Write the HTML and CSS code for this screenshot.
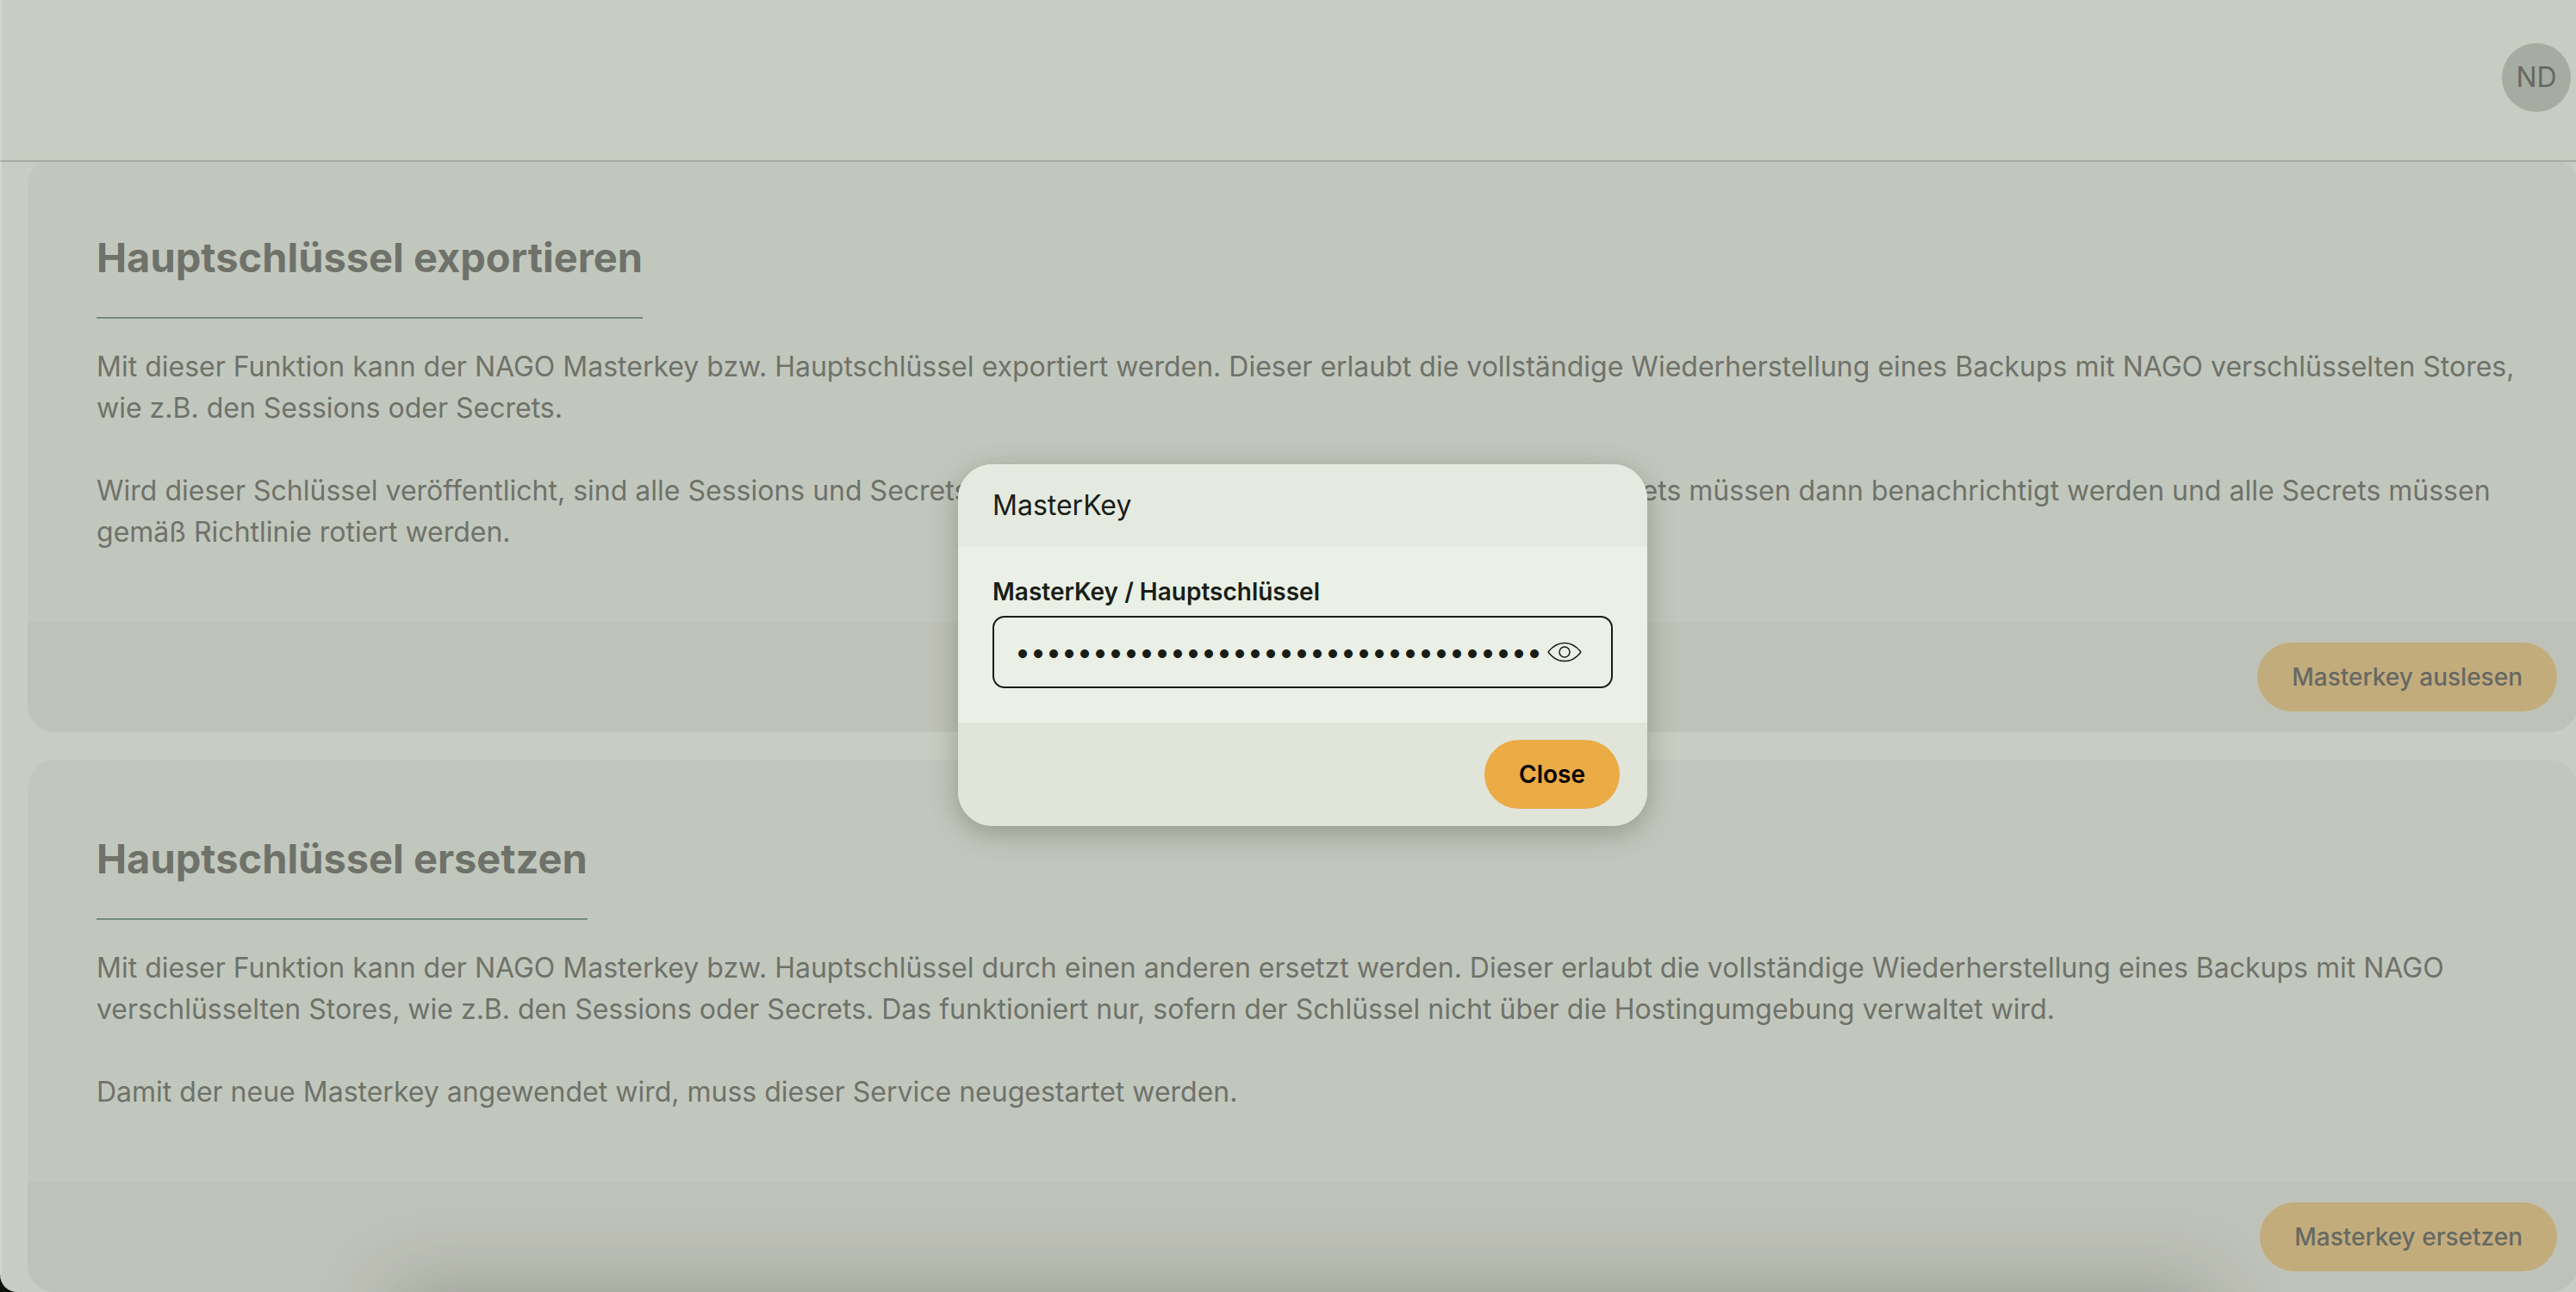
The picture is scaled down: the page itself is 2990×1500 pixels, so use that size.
FILE: index.html
```html
<!DOCTYPE html>
<html lang="de">
<head>
<meta charset="utf-8">
<title>Masterkey</title>
<link rel="stylesheet" href="styles.css">
</head>
<body>
<div class="app">
  <header class="topbar">
    <button class="avatar" type="button">ND</button>
  </header>
  <main class="cards">
    <section class="card">
      <div class="card-body">
        <h2 class="card-title">Hauptschlüssel exportieren</h2>
        <p class="card-text">Mit dieser Funktion kann der NAGO Masterkey bzw. Hauptschlüssel exportiert werden. Dieser erlaubt die vollständige Wiederherstellung eines Backups mit NAGO verschlüsselten Stores, wie z.B. den Sessions oder Secrets.</p>
        <p class="card-text">Wird dieser Schlüssel veröffentlicht, sind alle Sessions und Secrets kompromittiert. Alle Eigentümer der jeweiligen Secrets müssen dann benachrichtigt werden und alle Secrets müssen gemäß Richtlinie rotiert werden.</p>
      </div>
      <footer class="card-footer"><button class="button" type="button">Masterkey auslesen</button></footer>
    </section>
    <section class="card">
      <div class="card-body">
        <h2 class="card-title">Hauptschlüssel ersetzen</h2>
        <p class="card-text">Mit dieser Funktion kann der NAGO Masterkey bzw. Hauptschlüssel durch einen anderen ersetzt werden. Dieser erlaubt die vollständige Wiederherstellung eines Backups mit NAGO verschlüsselten Stores, wie z.B. den Sessions oder Secrets. Das funktioniert nur, sofern der Schlüssel nicht über die Hostingumgebung verwaltet wird.</p>
        <p class="card-text">Damit der neue Masterkey angewendet wird, muss dieser Service neugestartet werden.</p>
      </div>
      <footer class="card-footer"><button class="button" type="button">Masterkey ersetzen</button></footer>
    </section>
  </main>
  <div class="overlay">
    <div class="dialog" role="dialog" aria-modal="true" aria-labelledby="dialog-title">
      <header class="dialog-header" id="dialog-title">MasterKey</header>
      <div class="dialog-body">
        <label class="field-label" for="masterkey">MasterKey / Hauptschlüssel</label>
        <div class="field">
          <input class="field-input" id="masterkey" type="password" value="0123456789abcdef0123456789abcdef0123456789abcdef">
          <button class="field-toggle" type="button" aria-label="Anzeigen">
            <svg class="eye" viewBox="0 0 40 24" fill="none" stroke="currentColor" stroke-width="1.5" stroke-linejoin="round">
              <path d="M1.6 12.8Q1 12 1.6 11.2C6.500 5 13 1.400 20 1.400S33.500 5 38.400 11.200Q39 12 38.400 12.800C33.500 19 27 22.600 20 22.600S6.500 19 1.600 12.800Z"/>
              <circle cx="20" cy="12" r="6"/>
            </svg>
          </button>
        </div>
      </div>
      <footer class="dialog-footer"><button class="button button-primary" type="button">Close</button></footer>
    </div>
  </div>
</div>
<div class="window-edge"></div>
<div class="dock-shadow"></div>
</body>
</html>
```
FILE: styles.css
```css
* { box-sizing: border-box; }

html {
  overflow: hidden;
  background: #0b120b;
}

body {
  margin: 0;
  overflow: hidden;
  min-height: 100vh;
  font-family: Inter, "Liberation Sans", sans-serif;
  font-size: 32px;
  line-height: 48px;
  color: #6f726a;
  background: #c9ccc2;
  border-bottom-left-radius: 20px;
}

button, input { font: inherit; color: inherit; border: 0; padding: 0; margin: 0; background: none; }

/* The window's right edge lies beyond the visible area. */
.app { position: relative; width: calc(100% + 34px); }

.topbar {
  position: relative;
  z-index: 1;
  display: flex;
  justify-content: flex-end;
  height: 188px;
  padding: 50px 40px 0 0;
  border-bottom: 2px solid #a6aca1;
  background: #c9ccc2;
}

.avatar {
  width: 80px;
  height: 80px;
  border-radius: 50%;
  background: #a6aca1;
  color: #666963;
}

.cards {
  display: flex;
  flex-direction: column;
  gap: 32px;
  margin-top: -4px;
  padding: 0 32px;
}

.card { border-radius: 32px; background: #c2c7bd; overflow: hidden; }
.card-body { padding: 80px 64px 80px 80px; }

.card-title {
  width: fit-content;
  margin: 0 0 32px;
  padding-bottom: 34px;
  border-bottom: 2px solid #738c7d;
  font-size: 47px;
  line-height: 70px;
  font-weight: 700;
}

.card-text { margin: 0 0 48px; }
.card-text:last-child { margin-bottom: 0; }

.card-footer {
  display: flex;
  justify-content: flex-end;
  padding: 24px;
  background: #bfc2b8;
}

.button {
  height: 80px;
  padding: 0 40px;
  border-radius: 40px;
  background: #c3ac7c;
  color: #666963;
  font-size: 28px;
  font-weight: 500;
}

.overlay {
  position: absolute;
  z-index: 2;
  inset: 0;
  display: flex;
  align-items: center;
  justify-content: center;
  padding-bottom: 2px;
}

.dialog {
  width: 800px;
  border-radius: 40px;
  overflow: hidden;
  background: #eaf0e5;
  color: #191d17;
  box-shadow: 0 8px 32px rgba(60, 70, 55, 0.36);
}

.dialog-header { padding: 24px 40px; background: #e4eadf; }
.dialog-body { padding: 32px 40px 40px; }

.field-label {
  display: block;
  margin-bottom: 8px;
  font-size: 28px;
  line-height: 40px;
  font-weight: 600;
}

.field {
  display: flex;
  align-items: center;
  height: 84px;
  padding: 0 32px 0 24px;
  border: 2px solid #191d17;
  border-radius: 14px;
}

.field-input { flex: 1; min-width: 0; outline: none; }
.field-toggle { display: flex; margin: 0 2px 0 6px; }
.eye { width: 40px; height: 24px; }

.dialog-footer {
  display: flex;
  justify-content: flex-end;
  padding: 20px 32px;
  background: #e1e4d9;
}

.button-primary { background: #ebab45; color: #000; font-weight: 600; }

/* Light rim of the window on the left. */
.window-edge {
  position: fixed;
  z-index: 3;
  top: 0;
  bottom: 20px;
  left: 0;
  width: 2px;
  background: rgba(255, 255, 255, 0.2);
}

.dock-shadow {
  position: fixed;
  z-index: 3;
  top: 100%;
  left: 460px;
  right: 430px;
  height: 100px;
  box-shadow: 0 0 90px rgba(40, 45, 35, 0.28);
}
```
